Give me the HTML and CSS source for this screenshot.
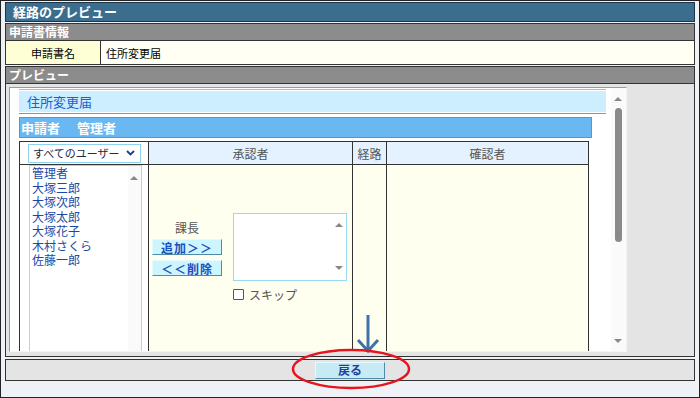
FILE: index.html
```html
<!DOCTYPE html>
<html lang="ja">
<head>
    <meta charset="UTF-8">
    <title>経路のプレビュー</title>
    <link rel="stylesheet" href="styles.css">
</head>
<body>
<div class="page">
    <div class="title">経路のプレビュー</div>
    <div class="sec-head">申請書情報</div>
    <table class="info">
        <tr><th>申請書名</th><td>住所変更届</td></tr>
    </table>
    <div class="sec-head preview-head">プレビュー</div>
    <div class="preview">
        <div class="viewport">
            <div class="doc">
                <div class="doc-title"><span>住所変更届</span></div>
                <div class="applicant"><span>申請者</span><span>管理者</span></div>
                <table class="route">
                    <colgroup>
                        <col class="w-users"><col class="w-approver"><col class="w-path"><col>
                    </colgroup>
                    <tr class="head">
                        <th class="users-head">
                            <div class="select">
                                <span>すべてのユーザー</span>
                                <svg width="9" height="6" viewBox="0 0 9 6"><path d="M1 1l3.5 3.5L8 1" fill="none" stroke="#1c3f8c" stroke-width="1.8"/></svg>
                            </div>
                        </th>
                        <th>承認者</th>
                        <th>経路</th>
                        <th>確認者</th>
                    </tr>
                    <tr class="body">
                        <td class="users">
                            <div class="userlist">
                                <ul>
                                    <li>管理者</li>
                                    <li>大塚三郎</li>
                                    <li>大塚次郎</li>
                                    <li>大塚太郎</li>
                                    <li>大塚花子</li>
                                    <li>木村さくら</li>
                                    <li>佐藤一郎</li>
                                </ul>
                                <span class="tri-up list-up"></span>
                            </div>
                        </td>
                        <td class="approver">
                            <div class="step">
                                <div class="step-left">
                                    <div class="step-name">課長</div>
                                    <button class="btn">追加＞＞</button>
                                    <button class="btn">＜＜削除</button>
                                </div>
                                <div class="step-right">
                                    <div class="picked">
                                        <span class="tri-up picked-up"></span>
                                        <span class="tri-down picked-down"></span>
                                    </div>
                                    <label class="skip"><span class="check"></span>スキップ</label>
                                </div>
                            </div>
                        </td>
                        <td class="path"></td>
                        <td class="confirm"></td>
                    </tr>
                </table>
            </div>
            <div class="scrollbar">
                <span class="tri-up sb-up"></span>
                <span class="sb-thumb"></span>
                <span class="tri-down sb-down"></span>
            </div>
        </div>
    </div>
    <div class="buttons">
        <button class="back">戻る</button>
    </div>
    <svg class="marks" width="700" height="398" viewBox="0 0 700 398">
        <path d="M368 315V350M358 340l10 11 10-11" fill="none" stroke="#3f72aa" stroke-width="3"/>
        <ellipse cx="351" cy="369" rx="58" ry="19" fill="none" stroke="#e8141b" stroke-width="2.5"/>
    </svg>
</div>
</body>
</html>
```

FILE: styles.css
```css
body {
    margin: 0;
    font-family: "Noto Sans CJK JP", "Liberation Sans", sans-serif;
    font-size: 12px;
}
.page {
    position: relative;
    width: 700px;
    height: 398px;
    box-sizing: border-box;
    border: 1px solid #222;
    background-color: #eef1f5;
    padding: 1px 4px 0 4px;
    overflow: hidden;
}
.title {
    height: 18px;
    line-height: 18px;
    border: 1px solid #1d3546;
    background-color: #3b6d8e;
    color: white;
    font-size: 13px;
    font-weight: bold;
    padding-left: 7px;
}
.sec-head {
    margin-top: 1px;
    height: 16px;
    line-height: 16px;
    border: 1px solid #333;
    background-color: #8c8c8c;
    color: white;
    font-size: 12px;
    font-weight: bold;
    padding-left: 3px;
}
.info {
    width: 100%;
    border-collapse: collapse;
    border: 1px solid #333;
    border-top: none;
}
.info th, .info td {
    height: 23px;
    padding: 0;
    font-size: 11px;
    font-weight: normal;
}
.info th {
    width: 94px;
    background-color: #ffffd6;
    border-right: 1px solid #333;
}
.info td {
    background-color: #fffff3;
    padding-left: 5px;
}
.preview-head {
    margin-top: 1px;
}
.preview {
    height: 269px;
    border: 1px solid #333;
    border-top: none;
    background-color: #e4e4e4;
    padding: 3px 0 0 3px;
    box-sizing: content-box;
}
.viewport {
    display: flex;
    width: 616px;
    height: 263px;
    border: 1px solid;
    border-color: #9a9a9a #f4f4f4 #f4f4f4 #9a9a9a;
    background-color: white;
    overflow: hidden;
}
.doc {
    flex: 1;
    padding: 1px 0 0 9px;
    overflow: hidden;
}
.doc-title {
    width: 587px;
    border-top: 1px solid #86c4ff;
    border-bottom: 1px solid #4ea2f2;
    padding: 1px 0;
    box-sizing: border-box;
}
.doc-title span {
    display: block;
    height: 21px;
    line-height: 21px;
    background-color: #cdeeff;
    color: #1c5fcf;
    font-size: 13px;
    padding-left: 8px;
}
.applicant {
    margin-top: 3px;
    width: 570px;
    height: 19px;
    line-height: 19px;
    border: 1px solid #8a8a8a;
    box-sizing: content-box;
    background-color: #6ab8f2;
    color: white;
    font-size: 13px;
    font-weight: bold;
    padding-left: 1px;
}
.applicant span + span {
    margin-left: 17px;
}
.route {
    margin-top: 3px;
    width: 570px;
    table-layout: fixed;
    border-collapse: collapse;
    border: 1px solid #333;
}
.w-users { width: 129px; }
.w-approver { width: 204px; }
.w-path { width: 34px; }
.route th, .route td {
    border: 1px solid #333;
    padding: 0;
}
.route .head th {
    height: 22px;
    background-color: #e4f1ff;
    color: #555;
    font-size: 12px;
    font-weight: normal;
}
.route .head .users-head {
    background-color: white;
}
.select {
    display: flex;
    align-items: center;
    justify-content: space-between;
    margin-left: 8px;
    width: 113px;
    height: 19px;
    box-sizing: border-box;
    border: 1px solid #8fd2f0;
    padding: 0 5px 0 4px;
    color: #222a44;
    font-size: 11px;
}
.route .body td {
    height: 200px;
    vertical-align: top;
    background-color: #fffff0;
}
.route .body .users {
    background-color: white;
}
.userlist {
    position: relative;
    margin-left: 9px;
    width: 113px;
    height: 198px;
    box-sizing: border-box;
    border: 1px solid #99ddff;
    border-bottom: none;
    background: linear-gradient(to right, white 98px, #fafafa 98px);
}
.userlist ul {
    list-style: none;
    margin: 0;
    padding: 0 0 0 2px;
}
.userlist li {
    height: 14.5px;
    line-height: 14.5px;
    color: #1b4aa5;
    font-size: 12px;
}
.tri-up, .tri-down {
    position: absolute;
    width: 0;
    height: 0;
    border-left: 4px solid transparent;
    border-right: 4px solid transparent;
}
.tri-up {
    border-bottom: 4px solid #888;
}
.tri-down {
    border-top: 4px solid #888;
}
.list-up {
    top: 10px;
    right: 3px;
}
.step {
    display: flex;
    padding-left: 3px;
}
.step-left {
    display: flex;
    flex-direction: column;
    width: 70px;
    padding-top: 55px;
}
.step-name {
    height: 16px;
    line-height: 16px;
    text-align: center;
    color: #555;
    font-size: 12px;
    margin-bottom: 3px;
}
.btn {
    height: 16px;
    margin: 0 0 5px 0;
    padding: 0;
    border: 1px solid;
    border-color: #e4fbff #4f8aa6 #4f8aa6 #e4fbff;
    background-color: #cdf5ff;
    color: #1c4dbd;
    font-family: inherit;
    font-size: 12px;
    font-weight: bold;
    line-height: 13px;
    letter-spacing: 1px;
}
.step-right {
    margin-left: 11px;
    padding-top: 48px;
}
.picked {
    position: relative;
    width: 114px;
    height: 68px;
    box-sizing: border-box;
    border: 1px solid #9ad8f2;
    background-color: white;
}
.picked-up {
    top: 9px;
    right: 3px;
}
.picked-down {
    bottom: 10px;
    right: 3px;
}
.skip {
    display: flex;
    align-items: center;
    margin-top: 6px;
    height: 14px;
    color: #555;
    font-size: 12px;
}
.check {
    width: 9px;
    height: 9px;
    border: 1px solid #555;
    border-radius: 1px;
    background-color: white;
    margin-right: 5px;
}
.scrollbar {
    position: relative;
    width: 15px;
    background-color: #fafafa;
}
.sb-up {
    top: 9px;
    left: 3px;
}
.sb-thumb {
    position: absolute;
    top: 20px;
    left: 4px;
    width: 7px;
    height: 134px;
    border-radius: 4px;
    background-color: #8a8a8a;
}
.sb-down {
    top: 251px;
    left: 3px;
}
.buttons {
    display: flex;
    justify-content: center;
    align-items: center;
    margin-top: 2px;
    height: 20px;
    border: 1px solid #333;
    background-color: #e4e4e4;
}
.back {
    width: 70px;
    height: 17px;
    padding: 0;
    border: 1px solid;
    border-color: #e8f8ff #4f8aa6 #4f8aa6 #e8f8ff;
    background-color: #c6ebf5;
    color: #233e9c;
    font-family: inherit;
    font-size: 12px;
    font-weight: bold;
    line-height: 14px;
}
.marks {
    position: absolute;
    top: -1px;
    left: -1px;
    pointer-events: none;
}
```
